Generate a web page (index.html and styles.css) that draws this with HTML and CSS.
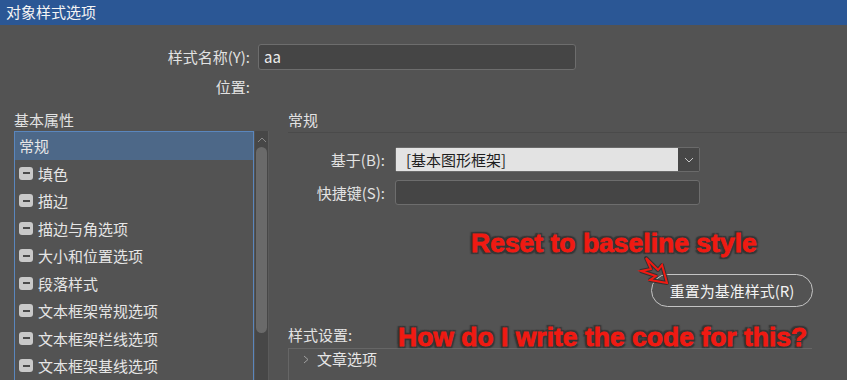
FILE: index.html
```html
<!DOCTYPE html>
<html lang="zh-CN">
  <head>
    <meta charset="UTF-8" />
    <meta name="viewport" content="width=device-width, initial-scale=1.0" />
    <title>对象样式选项</title>
    <link rel="stylesheet" href="styles.css">
  </head>
  <body>
    <div class="titlebar">对象样式选项</div>

    <div class="name-form">
      <label class="lbl">样式名称(Y):</label>
      <div class="text-field">aa</div>
      <label class="lbl">位置:</label>
      <div></div>
    </div>

    <div class="main">
      <div class="left">
        <div class="section-title">基本属性</div>
        <div class="list-wrap">
          <ul class="prop-list">
            <li class="selected">常规</li>
            <li><span class="chk"></span>填色</li>
            <li><span class="chk"></span>描边</li>
            <li><span class="chk"></span>描边与角选项</li>
            <li><span class="chk"></span>大小和位置选项</li>
            <li><span class="chk"></span>段落样式</li>
            <li><span class="chk"></span>文本框架常规选项</li>
            <li><span class="chk"></span>文本框架栏线选项</li>
            <li><span class="chk"></span>文本框架基线选项</li>
          </ul>
          <div class="scrollbar">
            <svg class="scroll-up" width="10" height="6" viewBox="0 0 10 6">
              <path d="M1 5 L5 1 L9 5" fill="none" stroke="#8a8a8a" stroke-width="1" />
            </svg>
            <div class="thumb"></div>
          </div>
        </div>
      </div>

      <div class="right">
        <div class="panel-title">常规</div>
        <div class="general-form">
          <label class="lbl">基于(B):</label>
          <div class="select">
            <span class="select-value">[基本图形框架]</span>
            <span class="select-btn">
              <svg width="10" height="6" viewBox="0 0 10 6">
                <path d="M1 1 L5 5 L9 1" fill="none" stroke="#c8c8c8" stroke-width="1" />
              </svg>
            </span>
          </div>
          <label class="lbl">快捷键(S):</label>
          <div class="text-field empty"></div>
        </div>

        <div class="reset-row">
          <button class="reset-btn">重置为基准样式(R)</button>
        </div>

        <div class="settings-label">样式设置:</div>
        <div class="settings-box">
          <div class="tree-item">
            <svg class="chev" width="6" height="9" viewBox="0 0 6 9">
              <path d="M1 1 L5 4.5 L1 8" fill="none" stroke="#a0a0a0" stroke-width="1" />
            </svg>
            文章选项
          </div>
        </div>
      </div>
    </div>

    <!-- annotations drawn over the dialog -->
    <div class="note note-reset">Reset to baseline style</div>
    <svg class="note-arrow" width="34" height="32" viewBox="0 0 34 32">
      <path class="arrow-shadow" d="M30 28 L13 25 L19 21 L4 16 L14 14 L9 3 L21 15 L25 10 Z" />
      <path class="arrow-line" d="M30 28 L13 25 L19 21 L4 16 L14 14 L9 3 L21 15 L25 10 Z" />
    </svg>
    <div class="note note-code">How do I write the code for this?</div>
  </body>
</html>
```

FILE: styles.css
```css
body {
  margin: 0;
  width: 847px;
  height: 380px;
  overflow: hidden;
  position: relative;
  background-color: #535353;
  color: #e2e2e2;
  font-family: "Noto Sans CJK SC", "Noto Sans", sans-serif;
  font-size: 15px;
}

.titlebar {
  height: 25px;
  line-height: 24px;
  padding-left: 6px;
  background-color: #2b5795;
  color: #f4f4f4;
}

.lbl {
  text-align: right;
  line-height: 20px;
  align-self: center;
}

.name-form {
  display: grid;
  grid-template-columns: 250px 318px;
  grid-template-rows: 26px 20px;
  column-gap: 8px;
  row-gap: 7px;
  margin-top: 19px;
}

.text-field {
  box-sizing: border-box;
  height: 26px;
  line-height: 24px;
  padding-left: 5px;
  background-color: #454545;
  border: 1px solid #6d6d6d;
  border-radius: 3px;
  color: #eeeeee;
}

.main {
  display: grid;
  grid-template-columns: 255px 1fr;
  column-gap: 19px;
  padding-left: 14px;
  margin-top: 13px;
}

.section-title {
  line-height: 20px;
  height: 21px;
}

.list-wrap {
  display: flex;
  height: 260px;
}

.prop-list {
  list-style: none;
  margin: 0;
  padding: 0;
  box-sizing: border-box;
  width: 241px;
  border: 1px solid #5a86bd;
  border-bottom: none;
}

.prop-list li {
  height: 27.5px;
  display: flex;
  align-items: center;
  padding-left: 4px;
  color: #e6e6e6;
}

.prop-list li.selected {
  background-color: #4d6888;
}

.chk {
  width: 14px;
  height: 13px;
  margin-right: 5px;
  border-radius: 3px;
  background-color: #c9c9c9;
  display: flex;
  align-items: center;
  justify-content: center;
}

.chk::after {
  content: "";
  width: 7px;
  height: 2px;
  background-color: #4a4a4a;
}

.scrollbar {
  width: 13px;
  margin-left: 1px;
  background-color: #474747;
  border-right: 1px solid #5b5b5b;
  display: flex;
  flex-direction: column;
  align-items: center;
}

.scroll-up {
  margin-top: 6px;
}

.thumb {
  width: 11px;
  height: 186px;
  margin-top: 4px;
  border-radius: 6px;
  background-color: #6a6a6a;
}

.panel-title {
  line-height: 20px;
  padding-bottom: 2px;
  border-bottom: 1px solid #4a4a4a;
}

.general-form {
  display: grid;
  grid-template-columns: 97px 305px;
  grid-template-rows: 25px 25px;
  column-gap: 10px;
  row-gap: 8px;
  margin-top: 14px;
}

.select {
  display: flex;
  height: 25px;
  box-sizing: border-box;
  border: 1px solid #6a6a6a;
  border-radius: 2px;
}

.select-value {
  flex: 1;
  background-color: #e3e3e3;
  color: #1e1e1e;
  line-height: 23px;
  padding-left: 10px;
}

.select-btn {
  width: 21px;
  background-color: #474747;
  display: flex;
  align-items: center;
  justify-content: center;
}

.general-form .text-field {
  height: 25px;
}

.reset-row {
  display: flex;
  padding-left: 363px;
  margin-top: 69px;
}

.reset-btn {
  width: 162px;
  height: 33px;
  border: 1px solid #c4c4c4;
  border-radius: 17px;
  background: transparent;
  color: #f2f2f2;
  font-family: inherit;
  font-size: 15px;
  padding: 0;
}

.settings-label {
  line-height: 20px;
  margin-top: 18px;
}

.settings-box {
  width: 523px;
  margin-top: 3px;
  height: 40px;
  border-top: 1px solid #666666;
  border-left: 1px solid #666666;
}

.tree-item {
  display: flex;
  align-items: center;
  line-height: 20px;
  padding-left: 14px;
  color: #e6e6e6;
}

.chev {
  margin-right: 8px;
}

.note {
  position: absolute;
  font-family: "Liberation Sans", Arial, sans-serif;
  font-weight: bold;
  font-size: 26.5px;
  line-height: 30px;
  color: #f01a12;
  white-space: nowrap;
  -webkit-text-stroke: 0.8px #f01a12;
  text-shadow:
    2px 2px 1px #363636,
    -2px -2px 1px #363636,
    2px -2px 1px #363636,
    -2px 2px 1px #363636,
    0 0 3px #2a2a2a;
}

.note-reset {
  left: 471px;
  top: 228px;
}

.note-code {
  left: 398px;
  top: 322px;
}

.note-arrow {
  position: absolute;
  left: 637px;
  top: 255px;
}

.arrow-shadow {
  fill: none;
  stroke: #333;
  stroke-width: 4;
  stroke-linejoin: round;
}

.arrow-line {
  fill: none;
  stroke: #f01a12;
  stroke-width: 2;
  stroke-linejoin: miter;
}
```
